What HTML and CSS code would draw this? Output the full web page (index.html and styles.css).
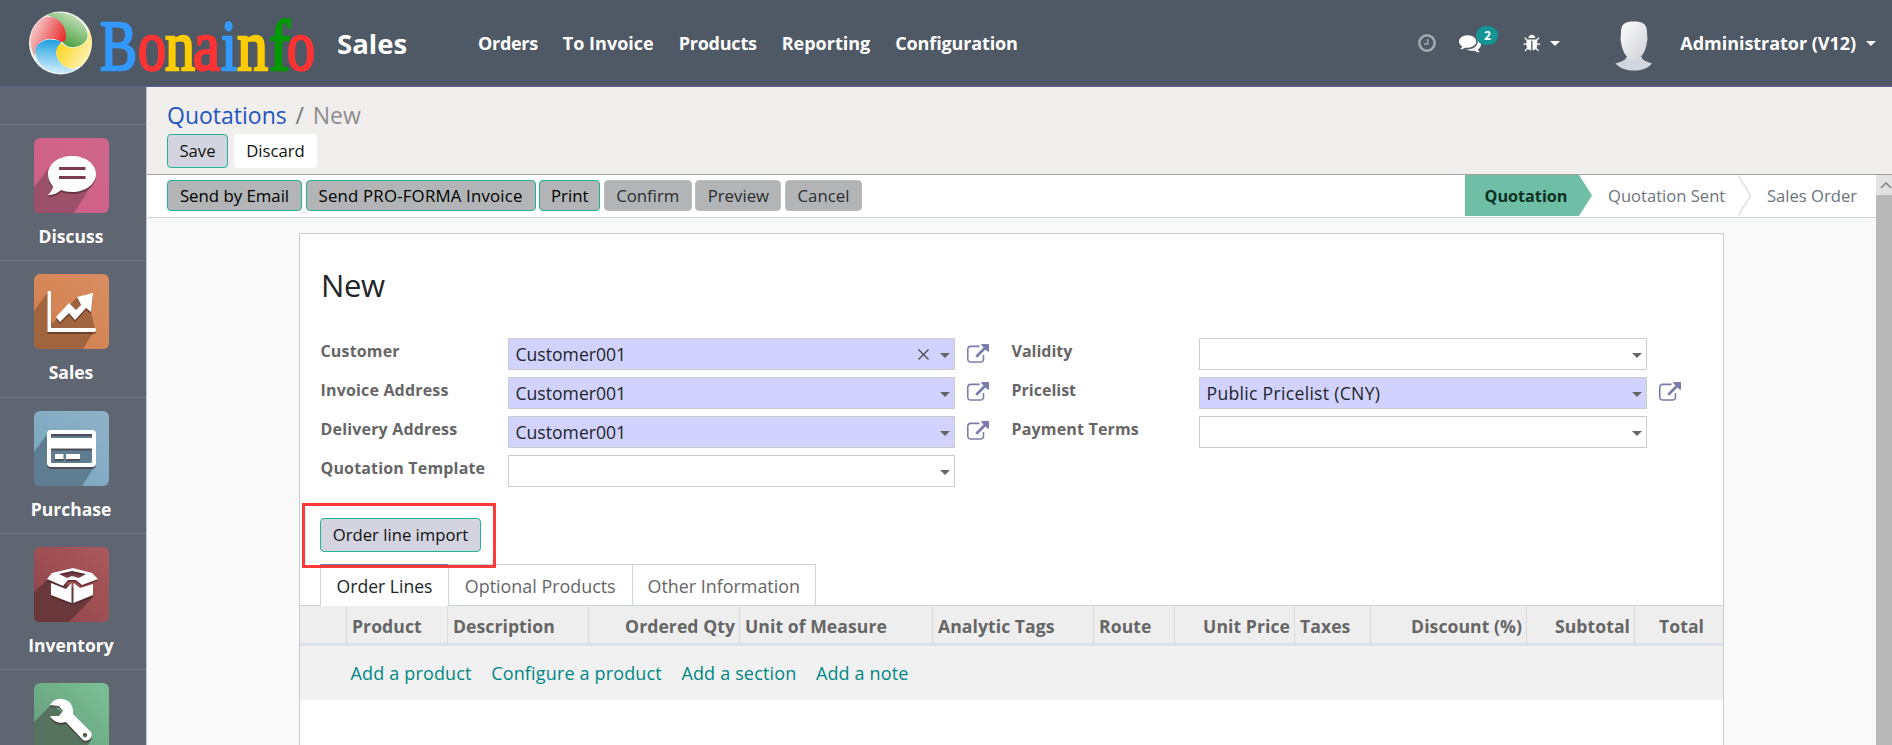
FILE: index.html
```html
<!DOCTYPE html>
<html lang="en">
<head>
<meta charset="utf-8">
<title>New - Quotations</title>
<link rel="stylesheet" href="styles.css">
</head>
<body>
<svg class="defs" width="0" height="0">
  <symbol id="ext" viewBox="0 0 1792 1792"><path d="M1408 928v320q0 119-84.500 203.500t-203.500 84.500h-832q-119 0-203.500-84.500t-84.500-203.500v-832q0-119 84.500-203.500t203.500-84.500h704q14 0 23 9t9 23v64q0 14-9 23t-23 9h-704q-66 0-113 47t-47 113v832q0 66 47 113t113 47h832q66 0 113-47t47-113v-320q0-14 9-23t23-9h64q14 0 23 9t9 23zm384-864v512q0 26-19 45t-45 19-45-19l-176-176-652 652q-10 10-23 10t-23-10l-114-114q-10-10-10-23t10-23l652-652-176-176q-19-19-19-45t19-45 45-19h512q26 0 45 19t19 45z"/></symbol>
</svg>
<header class="topbar">
  <svg class="logo" width="300" height="80" viewBox="0 0 300 80">
    <defs>
      <linearGradient id="lr" x1="0" y1="0.200" x2="1" y2="0.700"><stop offset="0.100" stop-color="#f5c6c6"/><stop offset="1" stop-color="#ea1c1c"/></linearGradient>
      <linearGradient id="lg" x1="0.900" y1="0.200" x2="0.400" y2="1"><stop offset="0" stop-color="#c3dfba"/><stop offset="1" stop-color="#3f9a35"/></linearGradient>
      <linearGradient id="ly" x1="0" y1="0.200" x2="1" y2="0.900"><stop offset="0" stop-color="#fbd000"/><stop offset="1" stop-color="#fff6cc"/></linearGradient>
      <linearGradient id="lb" x1="0.500" y1="0" x2="0.400" y2="1"><stop offset="0" stop-color="#1c9fdc"/><stop offset="1" stop-color="#d4f0fd"/></linearGradient>
    </defs>
    <circle cx="37.500" cy="38" r="31.500" fill="#f3f6ee"/>
    <path d="M23 10C34 5.500 48 7 57 16C64 23 68 32 61 38C55 43 46 44 40 38C43 28 41 14 23 10Z" fill="url(#lg)"/>
    <path d="M22 12C35 10 43 21 43 31C43 35 42 37 38 37C32 33 25 33 19 36C14 39 11 44 12 51C4 39 6 19 22 12Z" fill="url(#lr)"/>
    <path d="M12 46C13 37 24 33 31 35C35 35 38 36 38 38C33 42 32 49 35 54C39 60 44 65 53 64C40 73 14 68 12 46Z" fill="url(#lb)"/>
    <path d="M38 38C44 44 56 46 64 35C66 31 66 27 65 22C71 33 70 50 60 59C52 66 42 64 37 57C32 50 32 43 38 38Z" fill="url(#ly)"/>
    <g class="wordmark">
      <text x="77" y="64.500" color="#3399ff" textLength="37" lengthAdjust="spacingAndGlyphs">B</text>
      <text x="115" y="64.500" color="#ff3333" textLength="28" lengthAdjust="spacingAndGlyphs">o</text>
      <text x="142" y="64.500" color="#ffcc00" textLength="30" lengthAdjust="spacingAndGlyphs">n</text>
      <text x="170" y="64.500" color="#ff3333" textLength="27" lengthAdjust="spacingAndGlyphs">a</text>
      <text x="198" y="64.500" color="#3399ff" textLength="16" lengthAdjust="spacingAndGlyphs">i</text>
      <text x="214" y="64.500" color="#ffcc00" textLength="31" lengthAdjust="spacingAndGlyphs">n</text>
      <text x="246" y="64.500" color="#009900" textLength="21" lengthAdjust="spacingAndGlyphs">f</text>
      <text x="264" y="64.500" color="#ff3333" textLength="28" lengthAdjust="spacingAndGlyphs">o</text>
    </g>
  </svg>
  <div class="brand">Sales</div>
  <nav class="menu"><a class="orders">Orders</a><a>To Invoice</a><a class="products">Products</a><a>Reporting</a><a class="config">Configuration</a></nav>
  <div class="tray">
    <svg class="clock" width="18" height="18" viewBox="0 0 18 18" fill="none" stroke="#a6acb2"><circle cx="9" cy="9" r="7.700" stroke-width="2.400"/><path d="M9.700 5v5H6" stroke-width="1.400"/></svg>
    <div class="chat">
      <svg width="22" height="22" viewBox="0 0 1792 1792" fill="#fff"><path d="M1408 768q0 139-94 257t-256.500 186.500-353.500 68.500q-86 0-176-16-124 88-278 128-36 9-86 16h-3q-11 0-20.500-8t-11.500-21q-1-3-1-6.500t.5-6.500 2-6l2.500-5 3.500-5.500 4-5 4.500-5 4-4.500q5-6 23-25t26-29.500 22.500-29 25-38.500 20.500-44q-124-72-195-177t-71-224q0-139 94-257t256.500-186.500 353.500-68.500 353.500 68.500 256.500 186.500 94 257zm384 256q0 120-71 224.500t-195 176.500q10 24 20.500 44t25 38.500 22.500 29 26 29.500 23 25q1 1 4 4.500t4.500 5 4 5 3.500 5.500l2.500 5 2 6 .5 6.500-1 6.500q-3 14-13 22t-22 7q-50-7-86-16-154-40-278-128-90 16-176 16-271 0-472-132 58 4 88 4 161 0 309-45t264-129q125-92 192-212t67-254q0-77-23-152 129 71 204 178t75 230z"/></svg>
      <span class="badge">2</span>
    </div>
    <svg class="bug" width="19" height="19" viewBox="0 0 1792 1792" fill="#fff"><path d="M1632 960q0 26-19 45t-45 19h-224q0 171-67 290l208 209q19 19 19 45t-19 45q-18 19-45 19t-45-19l-198-197q-5 5-15 13t-42 28.500-65 36.500-82 29-97 13v-896h-128v896q-51 0-101.500-13.500t-87-33-66-39-43.500-32.500l-15-14-183 207q-20 21-48 21-24 0-43-16-19-18-20.500-44.500t15.500-46.500l202-227q-58-114-58-274h-224q-26 0-45-19t-19-45 19-45 45-19h224v-294l-173-173q-19-19-19-45t19-45 45-19 45 19l173 173h844l173-173q19-19 45-19t45 19 19 45-19 45l-173 173v294h224q26 0 45 19t19 45zm-480-576h-640q0-133 93.500-226.500t226.500-93.500 226.500 93.500 93.500 226.500z"/></svg>
    <i class="caret light"></i>
    <svg class="avatar" width="38" height="50" viewBox="0 0 38 50">
      <defs><linearGradient id="av" x1="0" y1="0" x2="1" y2="1"><stop offset="0" stop-color="#fdfdfd"/><stop offset="1" stop-color="#cdd0d7"/></linearGradient></defs>
      <path d="M11 36H27V37.500Q29 40 37 42.500C32 48 26 49.500 19 49.500C12 49.500 6 48 .5 42.500Q9 40 11 37.500Z" fill="#d3d6dd"/>
      <path d="M19 .5C28 .5 32 3 32 11C32 15 33 17 32 21C31 30 26 39 19 39C12 39 7 30 6 21C5 17 6 15 6 11C6 3 10 .5 19 .5Z" fill="url(#av)"/>
    </svg>
    <span class="user">Administrator (V12)</span>
    <i class="caret light"></i>
  </div>
</header>
<div class="body">
  <aside class="apps">
    <div class="spacer"></div>
    <div class="app"><svg width="75" height="75" viewBox="0 0 75 75"><defs><linearGradient id="a1" x1="0" y1="1" x2="1" y2="0"><stop offset="0" stop-color="#cf5f86"/><stop offset="1" stop-color="#d0668a"/></linearGradient></defs><rect width="75" height="75" rx="6" fill="url(#a1)"/><path d="M0 49L17 27L58 46L40 75H6Q0 75 0 69Z" fill="#9c5069"/><path class="glyph" d="M38 18c13.500 0 24 8 24 18s-10.500 18-24 18c-4 0-8-.8-11-2-3 3-8 5-13 5 3-3 5-6 5-8.500C16 45 14 41 14 36c0-10 10.500-18 24-18z"/><path d="M25 30.500H51.500M25 39.500H51.500" stroke="#7d3b53" stroke-width="3"/></svg><span>Discuss</span></div>
    <div class="app"><svg width="75" height="75" viewBox="0 0 75 75"><defs><linearGradient id="a2" x1="0" y1="1" x2="1" y2="0"><stop offset="0" stop-color="#d17e4c"/><stop offset="1" stop-color="#d98f62"/></linearGradient></defs><rect width="75" height="75" rx="6" fill="url(#a2)"/><path d="M0 37L14 18L18 50L43 23L57 24V38L61 56L49 75H6Q0 75 0 69Z" fill="#a0653f"/><path class="glyph" d="M13.500 17.500Q15 16 17 17.500V54H61Q63 56 61 58H13.500Z"/><path class="glyph" d="M22 43L35 29L42 36L47 31L43 23L59 19L57 38L52 34L41 46L35 39L26 48Z"/></svg><span>Sales</span></div>
    <div class="app"><svg width="75" height="75" viewBox="0 0 75 75"><defs><linearGradient id="a3" x1="0" y1="1" x2="1" y2="0"><stop offset="0" stop-color="#77a4bf"/><stop offset="1" stop-color="#8fb2c8"/></linearGradient></defs><rect width="75" height="75" rx="6" fill="url(#a3)"/><path d="M0 41L14 22L61 55L48 75H6Q0 75 0 69Z" fill="#5f7d90"/><path d="M17 23H58V27H17ZM17 37.500H58V51H17Z" fill="#5f7d90"/><path class="glyph" fill-rule="evenodd" d="M17 19H58Q62 19 62 23V52Q62 56 58 56H17Q13 56 13 52V23Q13 19 17 19ZM17 23V27H58V23ZM17 37.500V52H58V37.500ZM21 43H29.500V48H21ZM32 43H46V48H32Z"/></svg><span>Purchase</span></div>
    <div class="app"><svg width="75" height="75" viewBox="0 0 75 75"><defs><linearGradient id="a4" x1="0" y1="1" x2="1" y2="0"><stop offset="0" stop-color="#8e4448"/><stop offset="1" stop-color="#ab595c"/></linearGradient></defs><rect width="75" height="75" rx="6" fill="url(#a4)"/><path d="M0 45L16 30L59 50L35 75H6Q0 75 0 69Z" fill="#6a383b"/><path d="M38 22L54 27L38 33L22 27Z" fill="#723c4a"/><path class="glyph" fill-rule="evenodd" d="M39 21L58 26L64 32L48 38L42 33H34L29 39L13 32L18 26ZM38 24L25 27L33 31L38 29L45 31L52 27Z"/><path class="glyph" d="M17 36L32 42L37.500 36V56L17 48ZM39.500 36L46 41L59 37V48L39.500 56Z"/></svg><span>Inventory</span></div>
    <div class="app"><svg width="75" height="75" viewBox="0 0 75 75"><defs><linearGradient id="a5" x1="0" y1="1" x2="1" y2="0"><stop offset="0" stop-color="#629a78"/><stop offset="1" stop-color="#7cc096"/></linearGradient></defs><rect width="75" height="75" rx="6" fill="url(#a5)"/><path d="M0 39L18 21L58 56L45 75H6Q0 75 0 69Z" fill="#55735f"/><path class="glyph" fill-rule="evenodd" d="M16 22C19 17 24 15 28 16C36 17 40 23 39 31L57 49C60 54 54 60 49 57L32 39C26 41 19 39 16 33L25 33L29 28L25 23ZM51 50A2.200 2.200 0 1 0 51.100 54.400A2.200 2.200 0 0 0 51 50Z"/></svg></div>
  </aside>
  <main class="main">
    <div class="control">
      <div class="crumbs"><a>Quotations</a><span class="slash">/</span><span>New</span></div>
      <div class="actions"><button class="btn pri w61">Save</button><button class="btn sec">Discard</button></div>
    </div>
    <div class="statusbar">
      <div class="sbtns">
        <button class="sb hl w135">Send by Email</button><button class="sb hl w230 proforma">Send PRO-FORMA Invoice</button><button class="sb hl w61">Print</button><button class="sb w88">Confirm</button><button class="sb w86">Preview</button><button class="sb w77">Cancel</button>
      </div>
      <div class="steps">
        <div class="step on">Quotation</div>
        <div class="step sent"><span>Quotation Sent</span><svg width="14" height="41" viewBox="0 0 14 41" fill="none" stroke="#dee2e6" stroke-width="1.500"><path d="M0 0L12.500 20.500L0 41"/></svg></div>
        <div class="step so">Sales Order</div>
      </div>
    </div>
    <div class="content">
      <div class="sheet">
        <h1>New</h1>
        <div class="groups">
          <div class="group">
            <label>Customer</label><div class="inp req"><span>Customer001</span><svg class="clear" width="11" height="11" viewBox="0 0 11 11"><path d="M.5 .5l10 10M10.500 .5l-10 10" stroke="#444" stroke-width="1.200"/></svg><i class="caret"></i></div><svg class="ext"><use href="#ext"/></svg>
            <label>Invoice Address</label><div class="inp req"><span>Customer001</span><i class="caret"></i></div><svg class="ext"><use href="#ext"/></svg>
            <label>Delivery Address</label><div class="inp req"><span>Customer001</span><i class="caret"></i></div><svg class="ext"><use href="#ext"/></svg>
            <label>Quotation Template</label><div class="inp"><i class="caret"></i></div><b></b>
          </div>
          <div class="group">
            <label class="tight">Validity</label><div class="inp"><i class="caret"></i></div><b></b>
            <label class="tight">Pricelist</label><div class="inp req"><span class="pricelist">Public Pricelist (CNY)</span><i class="caret"></i></div><svg class="ext"><use href="#ext"/></svg>
            <label>Payment Terms</label><div class="inp"><i class="caret"></i></div><b></b>
          </div>
        </div>
        <div class="import"><button class="btn pri w161">Order line import</button><div class="marker"></div></div>
        <div class="tabs"><div class="tab on w128">Order Lines</div><div class="tab w184">Optional Products</div><div class="tab w184">Other Information</div></div>
        <div class="thead">
          <div></div><div>Product</div><div>Description</div><div class="r">Ordered Qty</div><div>Unit of Measure</div><div>Analytic Tags</div><div>Route</div><div class="r">Unit Price</div><div>Taxes</div><div class="r">Discount (%)</div><div class="r">Subtotal</div><div class="r last">Total</div>
        </div>
        <div class="adds"><a>Add a product</a><a>Configure a product</a><a>Add a section</a><a>Add a note</a></div>
      </div>
    </div>
    <div class="scroll"><div class="up"><svg width="12" height="8" viewBox="0 0 12 8" fill="none" stroke="#888" stroke-width="1.600"><path d="M1 7l5-5 5 5"/></svg></div></div>
  </main>
</div>
</body>
</html>
```
FILE: styles.css
```css
* { box-sizing: border-box; }
body { margin: 0; width: 1892px; height: 745px; overflow: hidden; font-family: "Open Sans", "Noto Sans", sans-serif; color: #212529; background: #f9f9f9; display: flex; flex-direction: column; }
.defs { position: absolute; }
.topbar { flex: none; height: 87px; background: #4e5965; border-bottom: 1px solid #5f5e97; display: flex; align-items: center; color: #fff; font-weight: 700; }
.logo { margin: 5px 0 1px 23px; flex: none; }
.wordmark { font-family: "Liberation Serif", serif; font-weight: 400; font-size: 72px; }
.wordmark text { fill: currentColor; stroke: currentColor; stroke-width: 2.500px; }
.brand { font-size: 27.500px; margin-left: 14px; width: 141px; }
.menu { display: flex; gap: 25px; font-size: 18px; }
.orders { letter-spacing: -.3px; }
.products { letter-spacing: -.23px; }
.config { letter-spacing: -.13px; }
.tray { margin-left: auto; display: flex; align-items: center; padding-right: 16px; font-size: 18px; }
.clock { margin-right: -1px; }
.chat { position: relative; margin-left: 24px; height: 22px; width: 22px; }
.badge { position: absolute; left: 17px; top: -6px; width: 22px; height: 19px; border-radius: 10px; background: #149494; font-size: 12px; line-height: 19px; text-align: center; }
.bug { margin-left: 42px; }
.caret { width: 0; height: 0; border: 5px solid transparent; border-top-color: #666; border-bottom: 0; }
.caret.light { border-top-color: #fff; margin-left: 8px; }
.avatar { margin: 5px 0 0 55px; }
.user { margin-left: 27px; letter-spacing: -.04px; }
.user + .caret.light { margin-left: 10px; }
.body { flex: 1; display: flex; min-height: 0; }
.apps { width: 147px; flex: none; background: #5f6671; border-right: 1px solid #c2c5ca; overflow: hidden; }
.spacer { height: 37px; }
.app { height: 136.300px; border-top: 1px solid #6d7a85; padding-top: 13px; padding-right: 4px; display: flex; flex-direction: column; align-items: center; color: #fff; font-weight: 700; font-size: 17.500px; line-height: 24px; }
.app svg { flex: none; margin-bottom: 11px; }
.glyph { fill: #fff; filter: drop-shadow(0 2px 0 rgba(60,30,30,.5)); }
.main { flex: 1; display: grid; grid-template-columns: 1fr 16px; grid-template-rows: 88px 43px 1fr; min-width: 0; }
.control { grid-column: 1 / 3; background: #f1eeee; border-bottom: 1px solid #a2a2a2; padding: 11px 0 0 20px; }
.crumbs { font-size: 23px; line-height: 34px; height: 36px; color: #8d8d8d; display: flex; }
.crumbs a { color: #2456bd; }
.slash { width: 26px; text-align: center; color: #777; }
.actions { display: flex; gap: 6px; }
button { font-family: inherit; padding: 0; margin: 0; text-align: center; white-space: nowrap; }
.btn { height: 34px; border-radius: 4px; font-size: 16.700px; line-height: 30px; color: #111; }
.pri { background: #d4d4e0; border: 1px solid #24b397; }
.sec { background: #fff; border: 0; width: 83px; }
.statusbar { grid-column: 1; background: #fff; border-bottom: 1px solid #cdd3da; display: flex; justify-content: space-between; padding-left: 20px; }
.sbtns { display: flex; gap: 3.600px; padding-top: 5px; }
.sb { height: 31px; border-radius: 4px; border: 1px solid #bcbec2; background: #b2b4b6; font-size: 16.800px; line-height: 29px; color: #2a2d30; }
.hl { border-color: #24b397; color: #000; }
.proforma { letter-spacing: .2px; }
.w61 { width: 61px; } .w135 { width: 135px; } .w230 { width: 230px; } .w88 { width: 88px; } .w86 { width: 86px; } .w77 { width: 77px; } .w161 { width: 161px; }
.steps { display: flex; height: 41px; line-height: 42px; font-size: 16.600px; color: #6c757d; white-space: nowrap; }
.step.on { width: 127px; padding-left: 19.500px; background: #6ebfa5; color: #0c3024; font-weight: 700; font-size: 16.200px; clip-path: polygon(0 0, 114px 0, 127px 50%, 114px 100%, 0 100%); }
.sent { padding-left: 16px; width: 160px; display: flex; justify-content: space-between; }
.so { padding-left: 15px; width: 124px; }
.content { grid-column: 1; padding: 15px 0 0 152px; min-height: 0; }
.sheet { width: 1425px; height: 520px; border: 1px solid #cbcdd4; background: #fff; }
h1 { margin: 29px 0 0 21px; font-size: 31px; letter-spacing: -.4px; font-weight: 400; line-height: 44px; height: 75px; }
.groups { display: flex; padding-left: 20.500px; height: 180px; }
.group { display: grid; grid-template-columns: 187px 447px 57px; grid-auto-rows: 38.900px; width: 691px; }
.group + .group { grid-template-columns: 187px 448px 56px; }
.group label { font-size: 16px; letter-spacing: .17px; font-weight: 700; color: #666; line-height: 27px; }
.group .tight { letter-spacing: 0; }
.inp { height: 32px; border: 1px solid #ccc; display: flex; align-items: center; padding: 0 4px 0 7px; font-size: 17.600px; }
.inp .caret { margin-left: auto; margin-top: 3px; }
.pricelist { letter-spacing: .3px; }
.req { background: #d2d2ff; }
.inp .clear { margin-left: auto; }
.inp .clear + .caret { margin-left: 11px; }
.ext { width: 22px; height: 22px; margin: 5.500px 0 0 12.500px; fill: #7c7bad; }
.import { position: relative; height: 46px; padding-left: 20px; }
.marker { position: absolute; left: 2px; top: -15px; width: 194px; height: 65px; border: 3px solid #ff3a3a; }
.tabs { display: flex; padding-left: 20px; height: 42px; border-bottom: 1px solid #ced4da; }
.tab { border: 1px solid #ced4da; border-bottom: 0; text-align: center; font-size: 17.900px; line-height: 42px; color: #666; margin-left: -1px; white-space: nowrap; }
.tab.on { height: 42px; margin-left: 0; background: #fff; color: #212529; border-top: 1px solid #7c7bad; font-size: 17.600px; }
.w128 { width: 129px; } .w184 { width: 184.500px; }
.thead { display: grid; grid-template-columns: 47px 101px 141px 151px 193px 161px 81px 120px 76px 156px 108px 88px; height: 40px; border-bottom: 3px solid #dee2e6; background: #eee; font-size: 17.600px; letter-spacing: .06px; font-weight: 700; color: #666; line-height: 40px; }
.thead div { border-right: 1px solid #dcdcde; padding: 0 4px 0 5px; white-space: nowrap; }
.thead .r { text-align: right; }
.thead .last { border: 0; padding-right: 19px; }
.adds { background: #f1f1f1; height: 54px; line-height: 54px; padding-left: 50.500px; display: flex; gap: 19.500px; font-size: 18px; letter-spacing: .16px; color: #008784; }
.scroll { grid-column: 2; grid-row: 2 / 4; background: #b8b8b8; }
.up { height: 20px; background: #e2e2e2; display: flex; align-items: center; justify-content: center; padding-left: 3px; }
```
